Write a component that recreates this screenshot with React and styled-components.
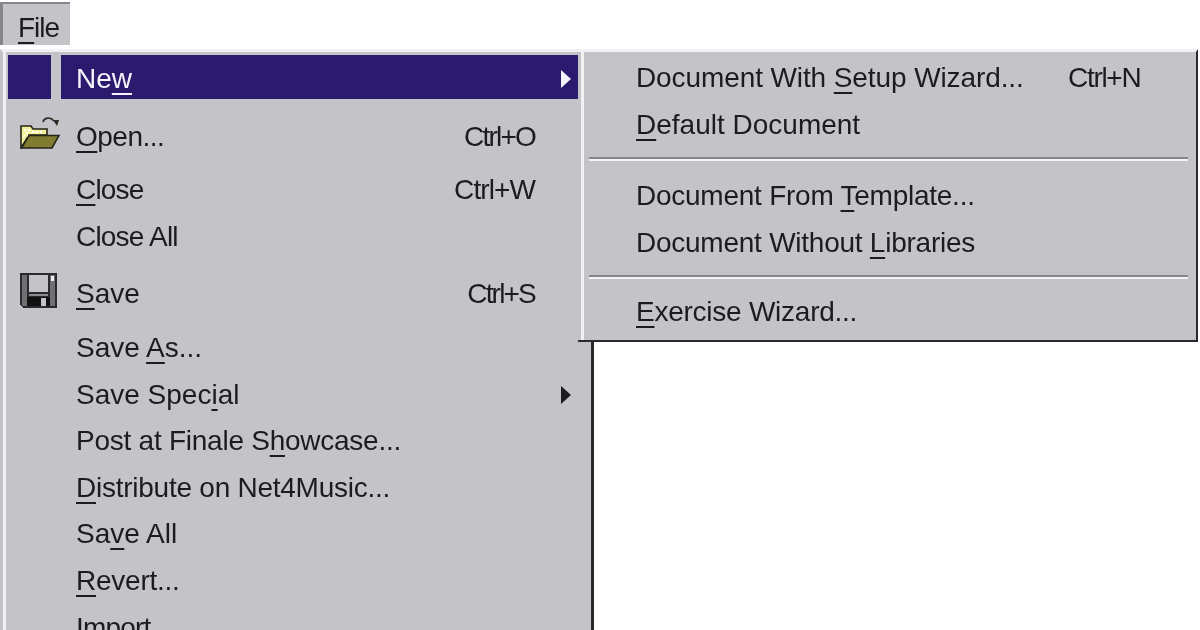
import React from 'react'
import styled, { createGlobalStyle } from 'styled-components'

const Global = createGlobalStyle`
  html, body {
    margin: 0;
    padding: 0;
    background: #fff;
  }
`

const Page = styled.div`
  position: relative;
  width: 1200px;
  height: 630px;
  overflow: hidden;
  background: #fff;
  font-family: "Liberation Sans", Arial, sans-serif;
  font-size: 28px;
  color: #1c1c20;
  filter: blur(0.6px);
`

const MenuBar = styled.div`
  display: flex;
  height: 49px;
  padding-top: 2px;
  box-sizing: border-box;
`

const FileButton = styled.div`
  width: 70px;
  height: 43px;
  box-sizing: border-box;
  padding: 7px 0 0 15px;
  display: flex;
  align-items: center;
  letter-spacing: -1px;
  background: #c3c3c8;
  border-top: 2px solid #85858a;
  border-left: 3px solid #85858a;
`

const Menu = styled.div`
  width: 594px;
  box-sizing: border-box;
  padding: 3px 13px 0 5px;
  background: #c3c3c8;
  border-top: 3px solid #f1f1f3;
  border-left: 3px solid #c3c3c8;
  border-right: 3px solid #2a2a2e;
  box-shadow: inset 3px 0 0 #f1f1f3;
`

const Row = styled.div`
  display: flex;
  gap: 10px;
  height: ${p => p.$height}px;
`

const IconSlot = styled.div`
  flex: 0 0 43px;
  min-width: 0;
  display: flex;
  align-items: center;
  padding: 0 0 4px 12px;
  box-sizing: border-box;
  background: ${p => (p.$active ? '#2b1a6e' : 'transparent')};
  height: ${p => (p.$active ? '44px' : 'auto')};

  svg {
    flex: none;
  }
`

const Label = styled.div`
  flex: 1;
  display: flex;
  align-items: center;
  padding: ${p => p.$shift || 0}px 0 0 15px;
  box-sizing: border-box;
  background: ${p => (p.$active ? '#2b1a6e' : 'transparent')};
  color: ${p => (p.$active ? '#f4f4fa' : 'inherit')};
  height: ${p => (p.$active ? '44px' : 'auto')};
`

const Text = styled.span`
  flex: 1;
  white-space: nowrap;
  letter-spacing: ${p => p.$track ?? -0.25}px;
`

const Shortcut = styled.span`
  white-space: nowrap;
  letter-spacing: ${p => p.$track ?? -1.8}px;
`

const ArrowSlot = styled.span`
  flex: 0 0 43px;
  display: flex;
  justify-content: flex-end;
  padding-right: 7px;
  box-sizing: border-box;
`

const Arrow = styled.span`
  width: 0;
  height: 0;
  border-left: 10px solid ${p => (p.$active ? '#f4f4fa' : '#1c1c20')};
  border-top: 9px solid transparent;
  border-bottom: 9px solid transparent;
`

const Key = styled.span`
  text-decoration: underline;
  text-decoration-thickness: 2px;
  text-underline-offset: 5px;
  text-decoration-skip-ink: none;
`

const SubMenu = styled.div`
  position: absolute;
  left: 581px;
  top: 49px;
  width: 617px;
  height: 293px;
  box-sizing: border-box;
  padding: 3px 8px 0 5px;
  background: #c3c3c8;
  border-top: 3px solid #f1f1f3;
  border-left: 3px solid #f1f1f3;
  border-right: 2px solid #2a2a2e;
  border-bottom: 2px solid #2a2a2e;

  &::after {
    content: "";
    position: absolute;
    left: -6px;
    bottom: -2px;
    width: 6px;
    height: 2px;
    background: #2a2a2e;
  }
`

const SubRow = styled.div`
  display: flex;
  align-items: center;
  height: 46.5px;
  padding-left: 47px;
`

const SubShortcut = styled.span`
  width: 120px;
  white-space: nowrap;
  letter-spacing: -1.3px;
`

const Divider = styled.div`
  height: 2px;
  margin: 9px 0 ${p => p.$below}px;
  background: #85858a;
  border-bottom: 2px solid #f4f4f6;
`

const FolderIcon = () => (
  <svg width="40" height="34" viewBox="0 0 40 34">
    <path d="M23 7c1-4 7-6 11-1" fill="none" stroke="#2a2a20" strokeWidth="1.6" />
    <path d="M33 5h6l-2 6z" fill="#2a2a20" />
    <path d="M1 33V11h10l2 3h14v6H9z" fill="#f3f09a" stroke="#25251a" strokeWidth="1.6" />
    <path d="M4 14h2v2H4zm4 0h2v2H8zm4 2h2v2h-2zm4 0h2v2h-2zm4 0h2v2h-2zM6 17h2v2H6zM3 20h2v2H3zm4 0h1v2H7z" fill="#fff" />
    <path d="M1.5 33L9 20.5h30L32 33z" fill="#807b30" stroke="#25251a" strokeWidth="1.6" />
  </svg>
)

const DiskIcon = () => (
  <svg width="37" height="35" viewBox="0 0 37 35" shapeRendering="crispEdges">
    <path d="M0 0h37v35H3l-3-3z" fill="#2a2a2c" />
    <path d="M2 2h5v31H2zM30 2h5v31h-5z" fill="#707074" />
    <path d="M9 2h19v17H9z" fill="#c3c3c8" />
    <path d="M9 21h19v2H9z" fill="#8a8a8e" />
    <path d="M7 24h23v9H7z" fill="#111" />
    <path d="M21 25h5v8h-5z" fill="#c3c3c8" />
    <path d="M31 3h3v5h-3z" fill="#eee" />
  </svg>
)

const mainItems = [
  { label: <><Key>O</Key>pen...</>, track: -0.5, shortcut: 'Ctrl+O', icon: <FolderIcon />, height: 65, shift: 7 },
  { label: <><Key>C</Key>lose</>, track: -0.8, shortcut: 'Ctrl+W', keyTrack: -0.9, height: 47 },
  { label: <>Close All</>, track: -0.8, height: 47 },
  { label: <><Key>S</Key>ave</>, track: 0, shortcut: 'Ctrl+S', icon: <DiskIcon />, height: 65, shift: 3 },
  { label: <>Save <Key>A</Key>s...</>, track: 0, height: 46 },
  { label: <>Save Spec<Key>i</Key>al</>, track: 0, arrow: true, height: 47 },
  { label: <>Post at Finale S<Key>h</Key>owcase...</>, height: 46 },
  { label: <><Key>D</Key>istribute on Net4Music...</>, height: 47 },
  { label: <>Sa<Key>v</Key>e All</>, track: 0, height: 46 },
  { label: <><Key>R</Key>evert...</>, height: 47 },
  { label: <>Import...</>, track: -0.8, height: 47 },
]

export default function App() {
  return (
    <Page>
      <Global />
      <MenuBar>
        <FileButton><Key>F</Key>ile</FileButton>
      </MenuBar>
      <Menu>
        <Row $height={46}>
          <IconSlot $active />
          <Label $active $shift={3}>
            <Text $track={0}>Ne<Key>w</Key></Text>
            <ArrowSlot><Arrow $active /></ArrowSlot>
          </Label>
        </Row>
        {mainItems.map((item, i) => (
          <Row key={i} $height={item.height}>
            <IconSlot>{item.icon}</IconSlot>
            <Label $shift={item.shift}>
              <Text $track={item.track}>{item.label}</Text>
              {item.shortcut && <Shortcut $track={item.keyTrack}>{item.shortcut}</Shortcut>}
              <ArrowSlot>{item.arrow && <Arrow />}</ArrowSlot>
            </Label>
          </Row>
        ))}
      </Menu>
      <SubMenu>
        <SubRow>
          <Text $track={-0.1}>Document With <Key>S</Key>etup Wizard...</Text>
          <SubShortcut>Ctrl+N</SubShortcut>
        </SubRow>
        <SubRow><Text $track={0}><Key>D</Key>efault Document</Text></SubRow>
        <Divider $below={12} />
        <SubRow><Text>Document From <Key>T</Key>emplate...</Text></SubRow>
        <SubRow><Text>Document Without <Key>L</Key>ibraries</Text></SubRow>
        <Divider $below={10} />
        <SubRow><Text><Key>E</Key>xercise Wizard...</Text></SubRow>
      </SubMenu>
    </Page>
  )
}
